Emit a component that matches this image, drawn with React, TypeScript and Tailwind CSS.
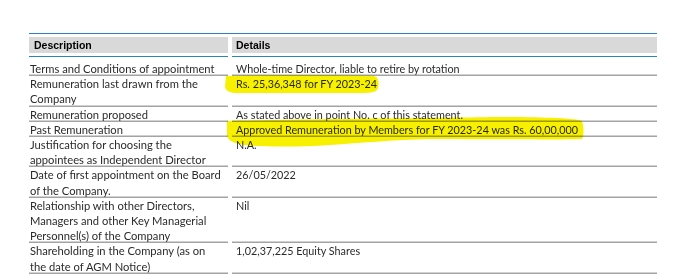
const rows: [string, string][] = [
  ["Terms and Conditions of appointment", "Whole-time Director, liable to retire by rotation"],
  ["Remuneration last drawn from the\nCompany", "Rs. 25,36,348 for FY 2023-24"],
  ["Remuneration proposed", "As stated above in point No. c of this statement."],
  ["Past Remuneration", "Approved Remuneration by Members for FY 2023-24 was Rs. 60,00,000"],
  ["Justification for choosing the\nappointees as Independent Director", "N.A."],
  ["Date of first appointment on the Board\nof the Company.", "26/05/2022"],
  ["Relationship with other Directors,\nManagers and other Key Managerial\nPersonnel(s) of the Company", "Nil"],
  ["Shareholding in the Company (as on\nthe date of AGM Notice)", "1,02,37,225 Equity Shares"],
];

export default function App() {
  return (
    <div className="relative w-[690px] h-[277px] overflow-hidden bg-white pt-[33px] pl-[29px] font-['Lato',sans-serif] text-[#2b2b2b]">
      <div className="w-[628px]">
        <div className="border-t-[1.5px] border-[#2a86b8] pt-[3px] grid grid-cols-[199px_1fr] gap-x-[4px]">
          <div className="border-b-[1.5px] border-[#2a86b8] pb-[3px]">
            <div className="h-[16px] bg-[#d9d9d9] pl-[5px] text-[10.5px] leading-[16px] font-bold text-black font-['Liberation_Sans',sans-serif]">
              Description
            </div>
          </div>
          <div className="border-b-[1.5px] border-[#2a86b8] pb-[3px]">
            <div className="h-[16px] bg-[#d9d9d9] pl-[4px] text-[10.5px] leading-[16px] font-bold text-black font-['Liberation_Sans',sans-serif]">
              Details
            </div>
          </div>
        </div>
        <div className="pt-[4px] grid grid-cols-[199px_1fr] gap-x-[4px] leading-[15.2px]">
          {rows.map(([d, v], i) => (
            <div key={i} className="contents">
              <div className="pl-[1px] text-[11.2px] whitespace-pre-line shadow-[inset_0_-1.5px_0_#a3a3a3]">{d}</div>
              <div className="pl-[4px] text-[10.8px] shadow-[inset_0_-1.5px_0_#a3a3a3]">{v}</div>
            </div>
          ))}
        </div>
      </div>

      {/* marker highlights */}
      <svg className="absolute left-0 top-0 mix-blend-multiply pointer-events-none" width="690" height="277">
        <path
          d="M226 76 C240 75 360 75 374 76 C379 77 379 84 378 88 C377 92 372 93 360 93 L238 93 C230 93 226 91 225 87 Z"
          fill="#f7f000"
        />
        <path
          d="M227 121 C300 119 450 118 495 117 C540 117 575 118 582 121 C584 128 584 135 582 139 C560 140 470 139 430 139 C390 140 360 143 330 145 C300 147 262 147 245 145 C233 143 228 141 227 135 Z"
          fill="#f7f000"
        />
      </svg>
    </div>
  );
}
